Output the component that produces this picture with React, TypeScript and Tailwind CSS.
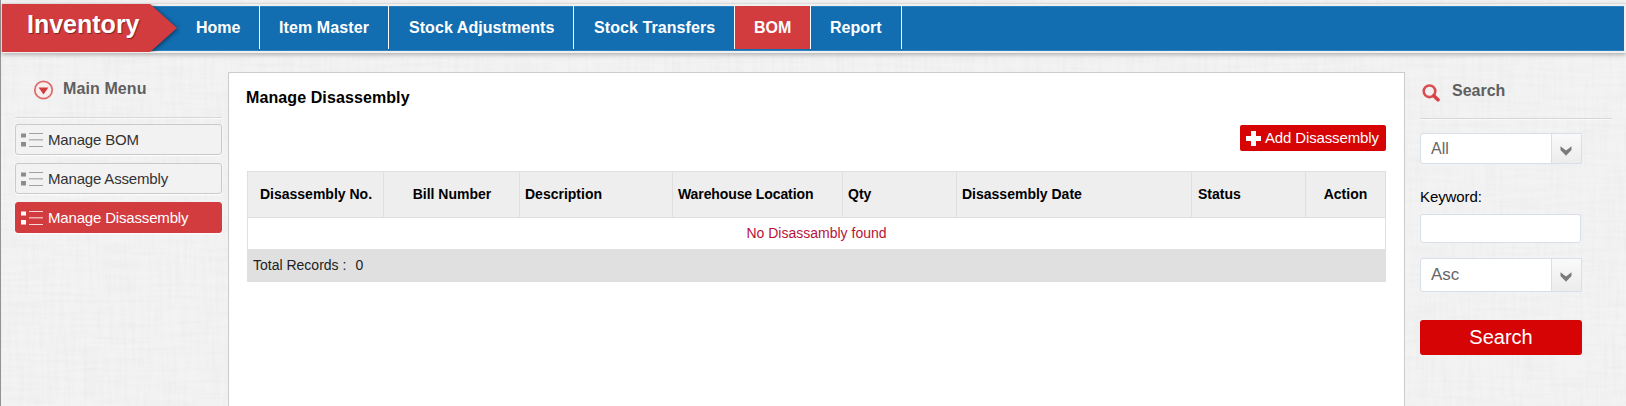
import { ReactNode } from 'react';

type NavItem = { label: string; width: string; active?: boolean };

const NAV: NavItem[] = [
  { label: 'Home', width: 'w-[83px] pl-[19px]' },
  { label: 'Item Master', width: 'w-[129px] pl-[19px] tracking-[0.1px]' },
  { label: 'Stock Adjustments', width: 'w-[185px] pl-5 tracking-[0.06px]' },
  { label: 'Stock Transfers', width: 'w-[161px] pl-5 tracking-[0.08px]' },
  { label: 'BOM', width: 'w-[76px] pl-[19px]', active: true },
  { label: 'Report', width: 'w-[91px] pl-[19px]' },
];

const COLUMNS = [
  { label: 'Disassembly No.', className: 'w-[136px] justify-center pl-px' },
  { label: 'Bill Number', className: 'w-[136px] justify-center pl-px' },
  { label: 'Description', className: 'w-[153px] pl-[5px]' },
  { label: 'Warehouse Location', className: 'w-[170px] pl-[5px] tracking-[-0.1px]' },
  { label: 'Qty', className: 'w-[114px] pl-[5px]' },
  { label: 'Disassembly Date', className: 'w-[235px] pl-[5px]' },
  { label: 'Status', className: 'w-[114px] pl-[6px]' },
  { label: 'Action', className: 'w-[80px] justify-center' },
];

function Linen() {
  return (
    <svg className="absolute inset-0 h-full w-full" aria-hidden="true">
      <filter id="warp" x="0" y="0" width="100%" height="100%">
        <feTurbulence type="fractalNoise" baseFrequency="0.25 0.02" numOctaves={2} seed={3} />
        <feColorMatrix values="0 0 0 0 0.5  0 0 0 0 0.5  0 0 0 0 0.5  0.5 0 0 0 -0.2" />
      </filter>
      <filter id="weft" x="0" y="0" width="100%" height="100%">
        <feTurbulence type="fractalNoise" baseFrequency="0.02 0.25" numOctaves={2} seed={8} />
        <feColorMatrix values="0 0 0 0 0.5  0 0 0 0 0.5  0 0 0 0 0.5  0.5 0 0 0 -0.2" />
      </filter>
      <rect width="100%" height="100%" filter="url(#warp)" opacity="0.3" />
      <rect width="100%" height="100%" filter="url(#weft)" opacity="0.3" />
    </svg>
  );
}

function ListIcon({ active }: { active?: boolean }) {
  return (
    <svg width="22" height="17" viewBox="0 0 22 17" className={active ? 'text-white' : 'text-[#8c8c8c]'}>
      <g fill="currentColor">
        <rect x="0" y="2.5" width="5" height="4" />
        <rect x="0" y="11" width="5" height="4.5" />
        <rect x="8" y="2" width="14" height="1" opacity="0.8" />
        <rect x="8" y="8" width="14" height="1.5" opacity="0.6" />
        <rect x="8" y="15" width="14" height="1" opacity="0.8" />
      </g>
    </svg>
  );
}

function SideItem({ label, active }: { label: string; active?: boolean }) {
  return (
    <a
      className={
        'flex h-[31px] items-center rounded-[3px] border pl-[5px] text-[15px] tracking-[-0.17px] shadow-[0_1px_2px_#fff] ' +
        (active ? 'border-[#d33c3e] bg-[#d33c3e] text-white' : 'border-[#cacaca] bg-[#f2f2f2] text-[#333]')
      }
    >
      <ListIcon active={active} />
      <span className="ml-[5px] pt-[2px]">{label}</span>
    </a>
  );
}

function Heading({ icon, children, className }: { icon: ReactNode; children: ReactNode; className: string }) {
  return (
    <div
      className={
        'flex items-start border-b border-[#d6d6d6] text-base font-bold text-[#5f5f5f] shadow-[0_1px_0_#fafafa] ' +
        className
      }
    >
      {icon}
      {children}
    </div>
  );
}

function Select({ value, className }: { value: string; className: string }) {
  return (
    <div className={'flex w-[162px] rounded-l-[3px] border border-[#d9dfe8] bg-white text-[#666] ' + className}>
      <span className="flex flex-1 items-center pl-[10px]">{value}</span>
      <span className="flex w-[30px] items-center justify-center border-l border-[#d9dfe8] bg-linear-to-b from-[#fafafa] to-[#ececec] pt-[4px] pr-[2px]">
        <svg width="12" height="10" viewBox="0 0 12 10">
          <path d="M0.5 0.2 L6 4.6 L11.5 0.2 V4 L6 9.7 L0.5 4 Z" fill="#7b7b7b" />
        </svg>
      </span>
    </div>
  );
}

export default function App() {
  return (
    <div className="relative h-[406px] w-full overflow-hidden bg-[#f3f3f3] font-['Liberation_Sans',Arial,sans-serif] text-black">
      <Linen />
      <div className="relative flex h-full flex-col border-l border-[#929292] pl-px">
        <header className="mt-[3px] flex h-[50px] w-full shrink-0 border-y border-t-[#dcdcdc] border-b-[#f0f0f0] bg-[#f0f0f0] shadow-[0_2px_4px_rgba(0,0,0,0.25)]">
          <div className="relative mt-[2px] flex h-[45px] w-[1622px] border-y border-[#2b80bd] bg-[#136db1]">
            <div className="relative -mt-[3px] h-[48px] w-[175px]">
              <svg className="absolute top-0 left-0" width="180" height="48" viewBox="0 0 180 48">
                <path
                  className="drop-shadow-[1px_1px_2px_rgba(0,0,0,0.5)]"
                  d="M0 0 H148 L175 24 L148 48 H0 Z"
                  fill="#d33c3e"
                />
              </svg>
              <span className="relative block pt-[1px] pl-[25px] text-[25px] leading-[38px] font-bold text-white [text-shadow:1px_1px_1px_rgba(0,0,0,0.4)]">
                Inventory
              </span>
            </div>
            <nav className="-mt-px flex h-[43px]">
              {NAV.map((item) => (
                <a
                  key={item.label}
                  className={
                    'flex items-center border-r border-white text-base leading-[43px] font-bold text-white ' +
                    item.width +
                    (item.active ? ' bg-[#d33c3e]' : '')
                  }
                >
                  {item.label}
                </a>
              ))}
            </nav>
          </div>
        </header>

        <div className="flex flex-1">
          <aside className="mt-[19px] ml-[13px] w-[207px]">
            <Heading
              className="h-[46px] pl-[18px]"
              icon={
                <svg className="mt-[8px] mr-[10px]" width="20" height="20" viewBox="0 0 20 20">
                  <circle cx="10.5" cy="10" r="8.7" fill="#f8eeee" stroke="#dd6a6c" strokeWidth="1.7" />
                  <path d="M5.6 7.6 H15.4 L10.5 14.4 Z" fill="#d33c3e" />
                </svg>
              }
            >
              <span className="mt-[5px] tracking-[0.1px]">Main Menu</span>
            </Heading>
            <div className="mt-[6px] flex flex-col gap-2">
              <SideItem label="Manage BOM" />
              <SideItem label="Manage Assembly" />
              <SideItem label="Manage Disassembly" active />
            </div>
          </aside>

          <main className="mt-[19px] ml-[6px] w-[1177px] border border-b-0 border-[#cbcbcb] bg-white pl-[16px]">
            <h1 className="mt-[13px] pl-px text-base leading-6 font-bold tracking-[0.1px]">Manage Disassembly</h1>
            <div className="mt-[15px] flex w-[1141px] justify-end">
              <button className="flex h-[26px] w-[146px] items-center rounded-[2px] bg-[#d60404] pl-[6px] text-[15px] tracking-[-0.14px] text-white">
                <svg className="mt-px mr-[4px]" width="15" height="15" viewBox="0 0 15 15">
                  <path d="M5 0 H10 V5 H15 V10 H10 V15 H5 V10 H0 V5 H5 Z" fill="white" />
                </svg>
                Add Disassembly
              </button>
            </div>
            <div className="mt-5 ml-[2px] w-[1139px] text-sm">
              <div className="flex h-[47px] border border-r-0 border-[#dfdfdf] bg-[#eee] font-bold">
                {COLUMNS.map((c) => (
                  <div key={c.label} className={'flex items-center border-r border-[#dfdfdf] pb-[2px] text-sm ' + c.className}>
                    {c.label}
                  </div>
                ))}
              </div>
              <div className="flex h-[31px] items-center justify-center border-x border-[#dfdfdf] pb-[2px] text-[#b9123a]">
                No Disassambly found
              </div>
              <div className="flex h-[33px] items-center gap-[9px] bg-[#e0e0e0] pb-[2px] pl-[6px] text-[#222]">
                <span>Total Records :</span>
                <span>0</span>
              </div>
            </div>
          </main>

          <aside className="mt-[19px] ml-[15px] w-[192px]">
            <Heading
              className="h-[47px] pl-[2px]"
              icon={
                <svg className="mt-[12px] mr-[12px]" width="18" height="19" viewBox="0 0 18 19">
                  <circle cx="7.5" cy="7.3" r="5.8" fill="none" stroke="#d94f50" strokeWidth="2.6" />
                  <path d="M11.8 11.8 L16 15.8" stroke="#d94244" strokeWidth="3.6" strokeLinecap="round" />
                </svg>
              }
            >
              <span className="mt-[7px]">Search</span>
            </Heading>
            <Select value="All" className="mt-[14px] h-[31px] text-[16px]" />
            <label className="mt-[21px] block text-[15px] leading-6 tracking-[-0.1px]">Keyword:</label>
            <input className="mt-[5px] block h-[29px] w-[161px] rounded-[3px] border border-[#d9dfe8] bg-white" />
            <Select value="Asc" className="mt-[15px] h-[34px] text-[17px]" />
            <button className="mt-7 block h-[35px] w-[162px] rounded-[3px] bg-[#d60404] pb-px text-[20px] text-white">Search</button>
          </aside>
        </div>
      </div>
    </div>
  );
}
